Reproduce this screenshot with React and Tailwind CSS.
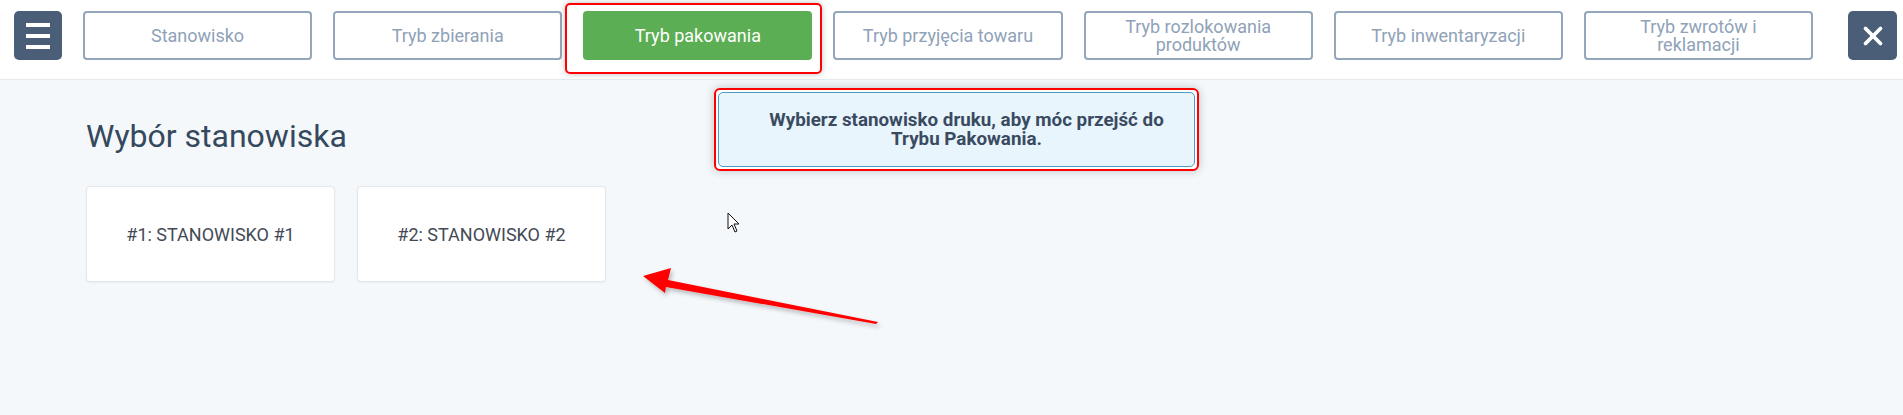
import { X } from "lucide-react";

const modes = [
  "Stanowisko",
  "Tryb zbierania",
  "Tryb pakowania",
  "Tryb przyjęcia towaru",
  "Tryb rozlokowania produktów",
  "Tryb inwentaryzacji",
  "Tryb zwrotów i reklamacji",
];

const stations = ["#1: STANOWISKO #1", "#2: STANOWISKO #2"];

const App = () => {
  return (
    <div
      className="relative w-[1903px] h-[415px] overflow-hidden bg-[#f5f8fb]"
      style={{ fontFamily: "Roboto, 'Liberation Sans', sans-serif" }}
    >
      {/* Header */}
      <header className="h-[80px] bg-white border-b border-[#e6eaef] flex items-start pt-[11px] pl-[14px]">
        <button className="w-[48px] h-[49px] rounded-[5px] bg-[#4a5e78] flex flex-col items-center justify-center gap-[7px]">
          <span className="block w-[24px] h-[4px] bg-white" />
          <span className="block w-[24px] h-[4px] bg-white" />
          <span className="block w-[24px] h-[4px] bg-white" />
        </button>

        <div className="ml-[21px] w-[1730px] grid grid-cols-7 gap-[21px]">
          {modes.map((mode) =>
            mode === "Tryb pakowania" ? (
              <div key={mode} className="relative">
                {/* screenshot highlight */}
                <div className="absolute -left-[18px] -right-[10px] -top-[8px] -bottom-[14px] rounded-[5px] border-2 border-[#ff0000] shadow-[0_0_6px_rgba(0,0,0,0.25)]" />
                <button className="relative w-full h-[49px] rounded-[4px] bg-[#5cae54] text-white text-[18px] leading-[18px]">
                  {mode}
                </button>
              </div>
            ) : (
              <button
                key={mode}
                className="h-[49px] rounded-[4px] border-2 border-[#93a6bb] bg-white text-[#8fa2b8] text-[18px] leading-[18px] px-6"
              >
                {mode}
              </button>
            )
          )}
        </div>

        <button className="ml-auto mr-[6px] w-[49px] h-[49px] rounded-[5px] bg-[#4a5e78] flex items-center justify-center">
          <X className="w-[30px] h-[30px] text-white" strokeWidth={3} />
        </button>
      </header>

      {/* Content */}
      <main className="pl-[86px] pt-[37px]">
        <h1 className="text-[32px] leading-[38px] font-normal text-[#34495e]">
          Wybór stanowiska
        </h1>
        <div className="mt-[31px] flex gap-[22px]">
          {stations.map((s) => (
            <div
              key={s}
              className="w-[249px] h-[96px] rounded-[4px] bg-white border border-[#e3e8ee] shadow-[0_1px_2px_rgba(0,0,0,0.05)] flex items-center justify-center text-[18px] text-[#434a55]"
            >
              {s}
            </div>
          ))}
        </div>
      </main>

      {/* Info tooltip */}
      <div className="absolute left-[714px] top-[88px] w-[485px] h-[83px] rounded-[6px] border-2 border-[#ff0000] shadow-[0_0_10px_rgba(0,0,0,0.22)] bg-white p-[2px]">
        <div className="w-full h-full rounded-[5px] border border-[#4d9cc4] bg-[#e8f5fd] flex items-center justify-center text-center text-[18.8px] leading-[19px] font-bold text-[#3a4a60] pl-[30px] pr-[10px]">
          Wybierz stanowisko druku, aby móc przejść do
          <br />
          Trybu Pakowania.
        </div>
      </div>

      {/* Mouse cursor */}
      <svg className="absolute left-[727px] top-[212px]" width="14" height="22" viewBox="0 0 14 22">
        <path d="M1 1 L1 17 L5 13 L8 20 L10 19 L7 12 L12 12 Z" fill="white" stroke="#111" strokeWidth="1" strokeLinejoin="round" />
      </svg>

      {/* Red annotation arrow */}
      <svg className="absolute left-0 top-0" width="1903" height="415" viewBox="0 0 1903 415">
        <defs>
          <filter id="sh" x="-10%" y="-50%" width="120%" height="200%">
            <feDropShadow dx="2" dy="3" stdDeviation="2" floodColor="#000" floodOpacity="0.25" />
          </filter>
        </defs>
        <path
          d="M643 276 L671 268 L668 280 L878 322 L876 324 L666 287 L665 293 Z"
          fill="#ff0000"
          filter="url(#sh)"
        />
      </svg>
    </div>
  );
};

export default App;
